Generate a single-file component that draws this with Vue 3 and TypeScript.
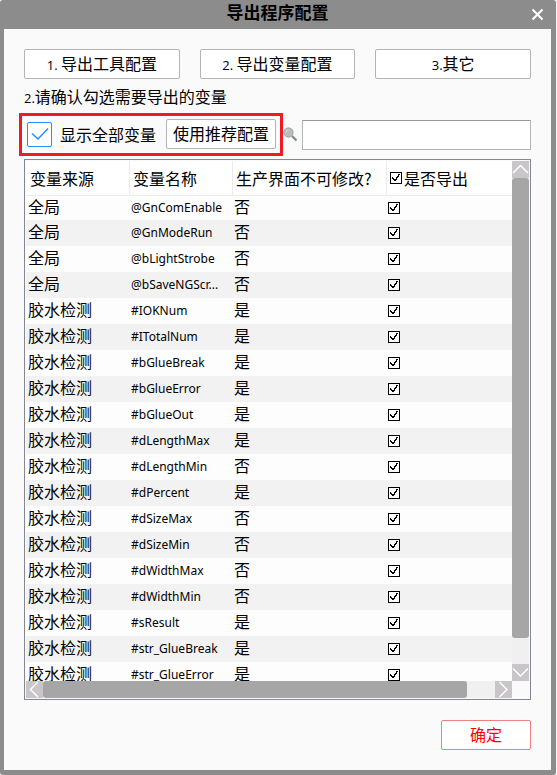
<script setup lang="ts">
import { computed, ref } from 'vue'

interface Variable {
  source: string
  name: string
  locked: boolean
  exported: boolean
}

const entries: [string, string, boolean][] = [
  ['全局', '@GnComEnable', false],
  ['全局', '@GnModeRun', false],
  ['全局', '@bLightStrobe', false],
  ['全局', '@bSaveNGScr...', false],
  ['胶水检测', '#IOKNum', true],
  ['胶水检测', '#ITotalNum', true],
  ['胶水检测', '#bGlueBreak', true],
  ['胶水检测', '#bGlueError', true],
  ['胶水检测', '#bGlueOut', true],
  ['胶水检测', '#dLengthMax', true],
  ['胶水检测', '#dLengthMin', false],
  ['胶水检测', '#dPercent', true],
  ['胶水检测', '#dSizeMax', false],
  ['胶水检测', '#dSizeMin', false],
  ['胶水检测', '#dWidthMax', false],
  ['胶水检测', '#dWidthMin', false],
  ['胶水检测', '#sResult', true],
  ['胶水检测', '#str_GlueBreak', true],
  ['胶水检测', '#str_GlueError', true],
]

const tick = 'M2 5h1v1h1v1h2v-2h1v-1h1v-2h2v1h-1v2h-1v1h-1v2h-1v1h-2v-1h-1v-1h-1z'

const variables = ref<Variable[]>(
  entries.map(([source, name, locked]) => ({ source, name, locked, exported: true })),
)
const showAll = ref(true)
const query = ref('')

const visible = computed(() =>
  variables.value.filter((v) => v.name.toLowerCase().includes(query.value.toLowerCase())),
)
const allExported = computed({
  get: () => variables.value.every((v) => v.exported),
  set: (on: boolean) => variables.value.forEach((v) => (v.exported = on)),
})
</script>

<template>
  <main class="dialog">
    <header class="titlebar">
      <h1>导出程序配置</h1>
      <button class="close" type="button" aria-label="关闭">
        <svg width="13" height="13" viewBox="0 0 13 13"><path d="M1.5 1.5l10 10M11.5 1.5l-10 10" /></svg>
      </button>
    </header>

    <div class="body">
      <nav class="steps">
        <button class="btn" type="button"><span class="latin">1. </span>导出工具配置</button>
        <button class="btn" type="button"><span class="latin">2. </span>导出变量配置</button>
        <button class="btn" type="button"><span class="latin">3.</span>其它</button>
      </nav>

      <p class="hint"><span class="latin">2.</span>请确认勾选需要导出的变量</p>

      <div class="toolbar">
        <div class="marked">
          <label class="show-all">
            <span class="bigcheck">
              <input v-model="showAll" type="checkbox" />
              <svg width="25" height="25" viewBox="0 0 25 25"><path d="M5 11.5l6 5.5L21 6.5" /></svg>
            </span>
            显示全部变量
          </label>
          <button class="btn" type="button">使用推荐配置</button>
        </div>
        <label class="search">
          <svg width="15" height="15" viewBox="0 0 15 15">
            <path d="M9 9l4.5 4.5" stroke="#858585" stroke-width="2.2" />
            <circle cx="5.5" cy="5.5" r="4.6" fill="#b9bcc0" stroke="#9c9c9c" />
            <path d="M3 5.5a2.6 2.6 0 0 1 2.5-2.6" fill="none" stroke="#d9dce0" />
          </svg>
          <input v-model="query" type="text" aria-label="搜索变量" />
        </label>
      </div>

      <section class="frame">
        <div class="viewport">
          <table>
            <colgroup>
              <col class="c-source" />
              <col class="c-name" />
              <col class="c-locked" />
              <col />
            </colgroup>
            <thead>
              <tr>
                <th>变量来源</th>
                <th>变量名称</th>
                <th>生产界面不可修改?</th>
                <th>
                  <label class="head-check">
                    <span class="check">
                      <input v-model="allExported" type="checkbox" />
                      <svg width="12" height="12" viewBox="0 0 12 12"><path :d="tick" /></svg>
                    </span>
                    是否导出
                  </label>
                </th>
              </tr>
            </thead>
            <tbody>
              <tr v-for="v in visible" :key="v.name">
                <td>{{ v.source }}</td>
                <td class="name">{{ v.name }}</td>
                <td>{{ v.locked ? '是' : '否' }}</td>
                <td class="pick">
                  <span class="check">
                    <input v-model="v.exported" type="checkbox" :aria-label="v.name" />
                    <svg width="12" height="12" viewBox="0 0 12 12"><path :d="tick" /></svg>
                  </span>
                </td>
              </tr>
            </tbody>
          </table>
        </div>

        <div class="bar vertical">
          <button type="button" aria-label="向上滚动">
            <svg width="17" height="17" viewBox="0 0 17 17"><path d="M1 12l7.5-7.5L16 12" /></svg>
          </button>
          <div class="track"><div class="thumb"></div></div>
          <button type="button" aria-label="向下滚动">
            <svg width="17" height="17" viewBox="0 0 17 17"><path d="M1 4.5L8.5 12 16 4.5" /></svg>
          </button>
        </div>

        <div class="bar horizontal">
          <button type="button" aria-label="向左滚动">
            <svg width="17" height="17" viewBox="0 0 17 17"><path d="M12 1L4.5 8.5 12 16" /></svg>
          </button>
          <div class="track"><div class="thumb"></div></div>
          <button type="button" aria-label="向右滚动">
            <svg width="17" height="17" viewBox="0 0 17 17"><path d="M4.5 1L12 8.5 4.5 16" /></svg>
          </button>
        </div>
      </section>

      <footer>
        <button class="btn confirm" type="button">确定</button>
      </footer>
    </div>
  </main>
</template>

<style>
body {
  margin: 0;
  background: #f4f4f4;
}
</style>

<style scoped>
* {
  box-sizing: border-box;
}

.dialog {
  display: flex;
  flex-direction: column;
  height: 100vh;
  margin-right: 1px;
  padding: 0 5px 5px 4px;
  border-radius: 3px;
  background: #8c8c8c;
  color: #000;
  font: 16px/24px "Noto Sans CJK SC", sans-serif;
}

button,
input {
  margin: 0;
  padding: 0;
  font: inherit;
  color: inherit;
}

svg {
  display: block;
  fill: none;
}

.latin {
  font-family: "Open Sans", "Noto Sans CJK SC", sans-serif;
  font-size: 13px;
  line-height: 16px;
  white-space: pre;
}

.titlebar {
  display: grid;
  grid-template-columns: 28px 1fr 28px;
  height: 29px;
  flex: none;
}

h1 {
  grid-column: 2;
  margin: 0;
  font-size: 17px;
  line-height: 24px;
  text-align: center;
}

.close {
  display: grid;
  place-items: center;
  height: 28px;
  border: 0;
  background: none;
}

.close path {
  stroke: #fff;
  stroke-width: 2;
}

.body {
  flex: 1;
  min-height: 0;
  display: flex;
  flex-direction: column;
  padding: 20px;
  background: #fafafa;
}

.steps {
  display: grid;
  grid-template-columns: repeat(3, 1fr);
  gap: 20px;
}

.btn {
  height: 30px;
  padding-bottom: 2px;
  border: 1px solid #b4b4b4;
  border-radius: 2px;
  background: #fff;
  line-height: 26px;
}

.hint {
  margin: 2px 0 0;
  padding-bottom: 2px;
  line-height: 30px;
}

.toolbar {
  display: flex;
  margin-bottom: 3px;
}

.marked {
  display: flex;
  align-items: center;
  gap: 10px;
  margin-left: -5px;
  padding: 3px 4px 4px 5px;
  border: 3px solid #ed1c24;
}

.marked .btn {
  width: 110px;
}

.show-all {
  display: flex;
  align-items: center;
  gap: 8px;
}

.bigcheck,
.check {
  display: grid;
}

.bigcheck > *,
.check > * {
  grid-area: 1 / 1;
}

.bigcheck input,
.check input {
  appearance: none;
  background: #fff;
}

.bigcheck svg,
.check svg {
  pointer-events: none;
  visibility: hidden;
}

.bigcheck input:checked + svg,
.check input:checked + svg {
  visibility: visible;
}

.bigcheck input {
  width: 25px;
  height: 25px;
  border: 1px solid #1e90ff;
  border-radius: 2px;
}

.bigcheck path {
  stroke: #1e90ff;
  stroke-width: 1.5;
}

.check {
  width: 12px;
}

.check input {
  width: 12px;
  height: 12px;
  border: 1px solid #000;
}

.check path {
  fill: #000;
  shape-rendering: crispEdges;
}

.search {
  flex: 1;
  display: flex;
  align-items: center;
  gap: 4px;
}

.search input {
  flex: 1;
  min-width: 0;
  height: 30px;
  padding: 0 6px;
  border: 1px solid #b4b4b4;
  border-top-color: #999;
  background: #fff;
}

.frame {
  flex: 1;
  min-height: 0;
  display: grid;
  grid-template: minmax(0, 1fr) 17px / minmax(0, 1fr) 17px;
  padding: 1px;
  border: 1px solid #828790;
}

.viewport {
  overflow: hidden;
  background: #fff;
}

table {
  width: 100%;
  table-layout: fixed;
  border-collapse: separate;
  border-spacing: 0;
}

.c-source {
  width: 104px;
}

.c-name {
  width: 103px;
}

.c-locked {
  width: 154px;
}

th {
  height: 35px;
  padding: 0 0 0 3px;
  border-right: 1px solid #ebebeb;
  border-bottom: 1px solid #ebebeb;
  font-weight: 400;
  text-align: left;
  white-space: nowrap;
}

th:first-child {
  padding-left: 4px;
}

th:last-child {
  border-right: 0;
}

.head-check {
  display: flex;
  align-items: center;
  gap: 2px;
}

td {
  height: 26px;
  padding: 0 0 4px 1px;
  background: #fdfdfd;
  line-height: 20px;
  white-space: nowrap;
}

td:first-child {
  padding-left: 2px;
}

td.name,
td.pick {
  padding-bottom: 0;
}

td.name {
  font-family: "Noto Sans", "Noto Sans CJK SC", sans-serif;
  font-size: 12px;
}

tbody tr:first-child td {
  height: 24px;
}

tbody tr:nth-child(even) td {
  background: #f2f2f2;
}

.bar {
  display: flex;
  background: #f0f0f0;
}

.vertical {
  flex-direction: column;
}

.bar button {
  flex: none;
  width: 17px;
  height: 17px;
  border: 0;
  background: #c8c6c8;
}

.bar path {
  stroke: #fff;
  stroke-width: 1.5;
}

.track {
  flex: 1;
  display: flex;
}

.vertical .track {
  flex-direction: column;
}

.thumb {
  border-radius: 3px;
  background: #a6a6a6;
}

.vertical .thumb {
  height: 94.6%;
}

.horizontal .thumb {
  width: 93.8%;
}

footer {
  display: flex;
  justify-content: flex-end;
  margin-top: 20px;
}

.confirm {
  width: 90px;
  border-color: #f08080;
  color: #f00;
}
</style>
